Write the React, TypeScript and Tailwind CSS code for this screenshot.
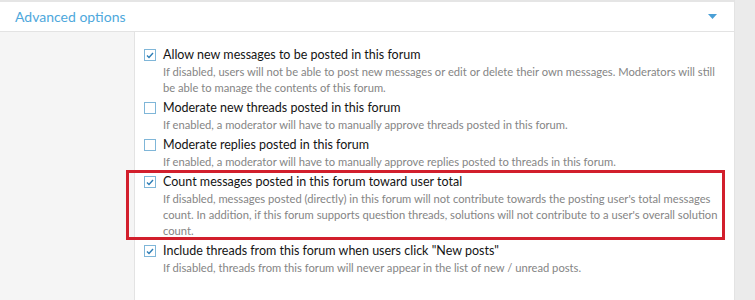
const options = [
  {
    checked: true,
    label: "Allow new messages to be posted in this forum",
    hint: "If disabled, users will not be able to post new messages or edit or delete their own messages. Moderators will still be able to manage the contents of this forum.",
  },
  {
    checked: false,
    label: "Moderate new threads posted in this forum",
    hint: "If enabled, a moderator will have to manually approve threads posted in this forum.",
  },
  {
    checked: false,
    label: "Moderate replies posted in this forum",
    hint: "If enabled, a moderator will have to manually approve replies posted to threads in this forum.",
  },
  {
    checked: true,
    label: "Count messages posted in this forum toward user total",
    hint: "If disabled, messages posted (directly) in this forum will not contribute towards the posting user's total messages count. In addition, if this forum supports question threads, solutions will not contribute to a user's overall solution count.",
  },
  {
    checked: true,
    label: 'Include threads from this forum when users click "New posts"',
    hint: "If disabled, threads from this forum will never appear in the list of new / unread posts.",
  },
];

const CheckBox = ({ checked }: { checked: boolean }) => {
  return (
    <span className="mt-[3px] flex h-[12px] w-[12px] shrink-0 items-center justify-center border border-[#7fb6d8] bg-white">
      {checked && (
        <svg width="8" height="7" viewBox="0 0 8 7">
          <path d="M1 3.5 L3 5.5 L7 1" fill="none" stroke="#2d7db5" strokeWidth="1.4" />
        </svg>
      )}
    </span>
  );
};

export default function App() {
  return (
    <div
      className="relative flex h-[300px] w-[755px] flex-col overflow-hidden bg-[#ebebeb]"
      style={{ fontFamily: '"Segoe UI", Lato, sans-serif' }}
    >
      <div className="flex w-[735px] flex-1 flex-col border-r border-[#e3e3e3] bg-white">
        <div className="h-[2px] bg-[#e5e5e5]" />
        <div className="flex h-[30px] items-center justify-between border-b border-[#e3e3e3] pl-[15px] pr-[17px]">
          <span className="text-[14px] text-[#4ea8dc]">Advanced options</span>
          <svg width="9" height="5" viewBox="0 0 9 5">
            <path d="M0 0 H9 L4.5 5 Z" fill="#4a9fd6" />
          </svg>
        </div>
        <div className="flex flex-1">
          <div className="w-[135px] border-r border-[#e3e3e3] bg-[#f5f5f5]" />
          <div className="flex flex-1 flex-col gap-[3px] pl-[9px] pr-[15px] pt-[14px]">
            {options.map((option) => (
              <div key={option.label} className="flex gap-[7px]">
                <CheckBox checked={option.checked} />
                <div className="flex flex-col">
                  <span className="text-[12.5px] leading-[18px] text-[#141414]">{option.label}</span>
                  <span className="text-[11.2px] leading-[16px] text-[#858585]">{option.hint}</span>
                </div>
              </div>
            ))}
            <div className="mt-[24px] h-[12px] w-[12px] rounded-full border border-[#7fb6d8]" />
          </div>
        </div>
      </div>
      <div className="pointer-events-none absolute left-[126px] top-[170px] h-[70px] w-[599px] border-[3px] border-[#d21f2c]" />
    </div>
  );
}
